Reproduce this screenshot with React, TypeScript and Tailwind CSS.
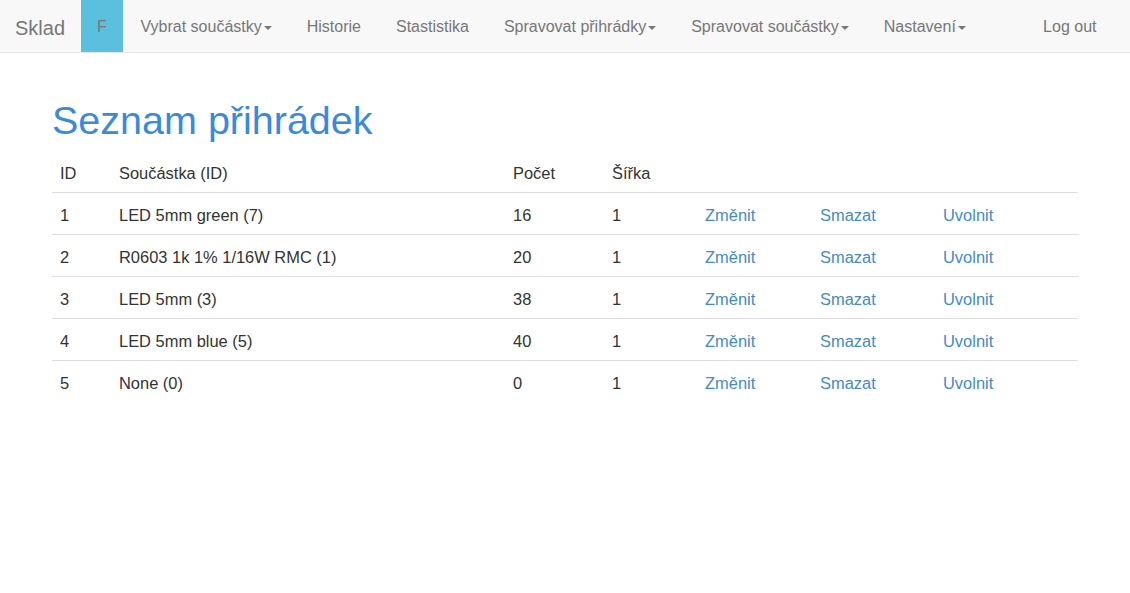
import React from "react";

const Caret = () => (
  <span className="inline-block w-0 h-0 ml-[2px] align-middle border-t-[4px] border-x-[4px] border-t-[#777] border-x-transparent border-solid" />
);

const NavItem = ({ label, caret }: { label: string; caret?: boolean }) => (
  <div className="px-[17.5px] pt-[17px] h-full leading-[20px] text-[#777] whitespace-nowrap">
    {label}
    {caret && <Caret />}
  </div>
);

const rows = [
  { id: 1, part: "LED 5mm green (7)", count: 16, width: 1 },
  { id: 2, part: "R0603 1k 1% 1/16W RMC (1)", count: 20, width: 1 },
  { id: 3, part: "LED 5mm (3)", count: 38, width: 1 },
  { id: 4, part: "LED 5mm blue (5)", count: 40, width: 1 },
  { id: 5, part: "None (0)", count: 0, width: 1 },
];

const cell = "px-[8px] pt-[10px] pb-[7px] leading-[24px]";

export default function App() {
  return (
    <div
      className="min-h-[593px] bg-white text-[16px] text-[#333]"
      style={{ fontFamily: '"Liberation Sans", Arial, sans-serif' }}
    >
      <nav className="flex h-[53px] bg-[#f8f8f8] border-b border-[#e7e7e7]">
        <div className="w-[81px] pl-[15px] pt-[16px] leading-[24px] text-[20px] text-[#777]">Sklad</div>
        <div className="w-[42px] h-[52px] bg-[#5bc0de] pt-[17px] leading-[20px] text-center text-[#777]">F</div>
        <div className="flex">
          <NavItem label="Vybrat součástky" caret />
          <NavItem label="Historie" />
          <NavItem label="Stastistika" />
          <NavItem label="Spravovat přihrádky" caret />
          <NavItem label="Spravovat součástky" caret />
          <NavItem label="Nastavení" caret />
        </div>
        <div className="ml-auto mr-[16px]">
          <NavItem label="Log out" />
        </div>
      </nav>

      <div className="px-[52px]">
        <h1 className="mt-[47px] mb-[11px] text-[39.5px] leading-[40px] text-[#3a8ad9] font-normal">
          Seznam přihrádek
        </h1>
        <table className="w-full table-fixed border-collapse text-[16.45px]">
          <colgroup>
            <col className="w-[59px]" />
            <col className="w-[394px]" />
            <col className="w-[99px]" />
            <col className="w-[93px]" />
            <col className="w-[115px]" />
            <col className="w-[123px]" />
            <col />
          </colgroup>
          <thead>
            <tr className="border-b border-[#ddd]">
              {["ID", "Součástka (ID)", "Počet", "Šířka", "", "", ""].map((h, i) => (
                <th key={i} className={`text-left font-normal ${cell}`}>
                  {h}
                </th>
              ))}
            </tr>
          </thead>
          <tbody>
            {rows.map((r, idx) => (
              <tr key={r.id} className={idx < rows.length - 1 ? "border-b border-[#ddd]" : ""}>
                <td className={cell}>{r.id}</td>
                <td className={`${cell} whitespace-nowrap`}>{r.part}</td>
                <td className={cell}>{r.count}</td>
                <td className={cell}>{r.width}</td>
                <td className={`${cell} text-[#428bca]`}>Změnit</td>
                <td className={`${cell} text-[#428bca]`}>Smazat</td>
                <td className={`${cell} text-[#428bca]`}>Uvolnit</td>
              </tr>
            ))}
          </tbody>
        </table>
      </div>
    </div>
  );
}
